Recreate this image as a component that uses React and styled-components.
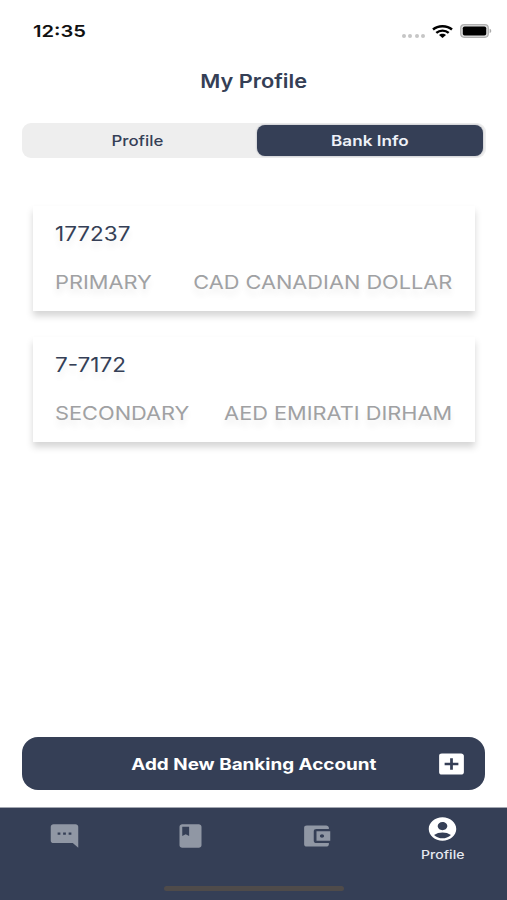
import React from 'react';
import styled, { createGlobalStyle } from 'styled-components';
import { MdTextsms, MdBook, MdAccountBalanceWallet, MdAccountCircle, MdAddBox } from 'react-icons/md';

var GlobalStyle = createGlobalStyle`
  body {
    margin: 0;
    background-color: #fff;
    font-family: Inter, Roboto, sans-serif;
  }
`;

var Screen = styled.div`
  box-sizing: border-box;
  width: 507px;
  height: 900px;
  display: flex;
  flex-direction: column;
  background-color: #fff;
  overflow: hidden;
`;

// wide lettering, stretched from the side the text is aligned to
var Label = styled.span`
  display: inline-block;
  white-space: nowrap;
  font-size: ${props => props.$size}px;
  font-weight: ${props => props.$weight || 400};
  line-height: 24px;
  color: ${props => props.$color || '#353f56'};
  transform: scaleX(${props => props.$stretch || 1.18});
  transform-origin: ${props => props.$from || 'center'};
`;

var StatusBar = styled.div`
  display: flex;
  align-items: center;
  justify-content: space-between;
  height: 24px;
  padding: 19px 15px 0 33px;
`;

var StatusIcons = styled.div`
  display: flex;
  align-items: center;
  gap: 7px;
`;

var Signal = styled.div`
  display: flex;
  gap: 2.5px;
  margin-top: 9px;
`;

var SignalDot = styled.div`
  width: 4px;
  height: 4px;
  border-radius: 50%;
  background-color: #c6c6c6;
`;

var Title = styled.h1`
  margin: 27px 0 0;
  height: 24px;
  font-size: 19px;
  line-height: 24px;
  text-align: center;
`;

var Tabs = styled.div`
  box-sizing: border-box;
  display: flex;
  height: 35px;
  margin: 29px 21px 0 22px;
  padding: 2px 3px 2px 0;
  border-radius: 9px;
  background-color: #eee;
`;

var Tab = styled.button`
  flex: ${props => props.$active ? '0 0 226px' : '1 1 auto'};
  padding: ${props => props.$active ? '0' : '0 4px 0 0'};
  border: none;
  border-radius: 8px;
  background-color: ${props => props.$active ? '#353f56' : 'transparent'};
  box-shadow: ${props => props.$active ? '0 0 2px rgba(53, 63, 86, 0.45)' : 'none'};
  font-family: inherit;
  cursor: pointer;
`;

var AccountList = styled.div`
  flex: 1;
  display: flex;
  flex-direction: column;
  gap: 26px;
  padding: 48px 32px 0 33px;
`;

var AccountCard = styled.div`
  box-sizing: border-box;
  height: 105px;
  padding: 16px 23px 0 22px;
  background-color: #fff;
  box-shadow: 0 5px 7px rgba(0, 0, 0, 0.17);
  text-shadow: 0 6px 6px rgba(0, 0, 0, 0.08);
`;

var AccountDetails = styled.div`
  display: flex;
  justify-content: space-between;
  margin-top: 25px;
`;

var AddButton = styled.button`
  display: flex;
  align-items: center;
  height: 53px;
  flex-shrink: 0;
  margin: 0 22px 17px;
  padding: 0 17px 0 50px;
  border: none;
  border-radius: 16px;
  background-color: #353f56;
  font-family: inherit;
  color: #fff;
  cursor: pointer;
`;

var AddButtonText = styled.div`
  flex: 1;
  text-align: center;
`;

var NavBar = styled.nav`
  box-sizing: border-box;
  position: relative;
  display: grid;
  grid-template-columns: repeat(4, 1fr);
  height: 93px;
  padding: 0 1px;
  flex-shrink: 0;
  border-top: 1px solid #a3a7b1;
  background-color: #353f56;
`;

var NavItem = styled.a`
  display: flex;
  flex-direction: column;
  align-items: center;
  padding-top: ${props => props.$active ? 7 : 14}px;
  color: ${props => props.$active ? '#fff' : '#9097a4'};
`;

var Glyph = styled.svg.attrs({ preserveAspectRatio: 'none' })`
  display: block;
  width: 33px;
  height: 28px;
  transform: ${props => props.$mirrored ? 'scaleX(-1)' : 'none'};
`;

var HomeIndicator = styled.div`
  position: absolute;
  left: 164px;
  bottom: 9px;
  width: 180px;
  height: 5px;
  border-radius: 3px;
  background-color: #4f4b4a;
`;

var accounts = [
  { number: '177237', type: 'PRIMARY', currency: 'CAD CANADIAN DOLLAR' },
  { number: '7-7172', type: 'SECONDARY', currency: 'AED EMIRATI DIRHAM' }
];

var WifiIcon = () => (
  <svg width="21" height="13" viewBox="0 0 21 13" fill="none" stroke="#000" strokeWidth="2.4">
    <path d="M1 4.5C6 .2 15 .2 20 4.5" />
    <path d="M4.3 7.9c3.4-3 9-3 12.4 0" />
    <path d="M7 10c1.9-1.7 5.1-1.7 7 0L10.5 13z" fill="#000" stroke="none" />
  </svg>
);

var BatteryIcon = () => (
  <svg width="32" height="14" viewBox="0 0 32 14">
    <rect x=".7" y=".7" width="27.6" height="12.6" rx="3.5" fill="#ddd" stroke="#b0b0b0" strokeWidth="1.2" />
    <rect x="2.8" y="2.5" width="23.4" height="9" rx="1.8" fill="#000" />
    <path d="M29.6 4.8c2.2.5 2.2 3.9 0 4.4z" fill="#aaa" />
  </svg>
);

var Account = ({ account }) => (
  <AccountCard>
    <Label $size={19.5} $stretch={1.155} $from="left">{account.number}</Label>
    <AccountDetails>
      <Label $size={19} $stretch={1.147} $color="#a0a1a3" $from="left">{account.type}</Label>
      <Label $size={19} $stretch={1.145} $color="#a0a1a3" $from="right">{account.currency}</Label>
    </AccountDetails>
  </AccountCard>
);

class App extends React.Component {
  render() {
    return (
      <Screen>
        <GlobalStyle />
        <StatusBar>
          <Label $size={16.5} $stretch={1.22} $weight={600} $color="#111" $from="left">12:35</Label>
          <StatusIcons>
            <Signal>
              <SignalDot />
              <SignalDot />
              <SignalDot />
              <SignalDot />
            </Signal>
            <WifiIcon />
            <BatteryIcon />
          </StatusIcons>
        </StatusBar>
        <Title>
          <Label $size={19} $stretch={1.145} $weight={600}>My Profile</Label>
        </Title>
        <Tabs>
          <Tab><Label $size={14.5} $stretch={1.16} $weight={500}>Profile</Label></Tab>
          <Tab $active><Label $size={14.5} $weight={600} $color="#eef1f8">Bank Info</Label></Tab>
        </Tabs>
        <AccountList>
          {accounts.map(account => <Account key={account.number} account={account} />)}
        </AccountList>
        <AddButton>
          <AddButtonText>
            <Label $size={16} $weight={700} $color="#fff">Add New Banking Account</Label>
          </AddButtonText>
          <Glyph as={MdAddBox} />
        </AddButton>
        <NavBar>
          <NavItem><Glyph as={MdTextsms} $mirrored /></NavItem>
          <NavItem><Glyph as={MdBook} /></NavItem>
          <NavItem><Glyph as={MdAccountBalanceWallet} /></NavItem>
          <NavItem $active>
            <Glyph as={MdAccountCircle} />
            <Label $size={11.5} $stretch={1.22} $weight={500} $color="#e6e9f0">Profile</Label>
          </NavItem>
          <HomeIndicator />
        </NavBar>
      </Screen>
    );
  }
}

export default App;
